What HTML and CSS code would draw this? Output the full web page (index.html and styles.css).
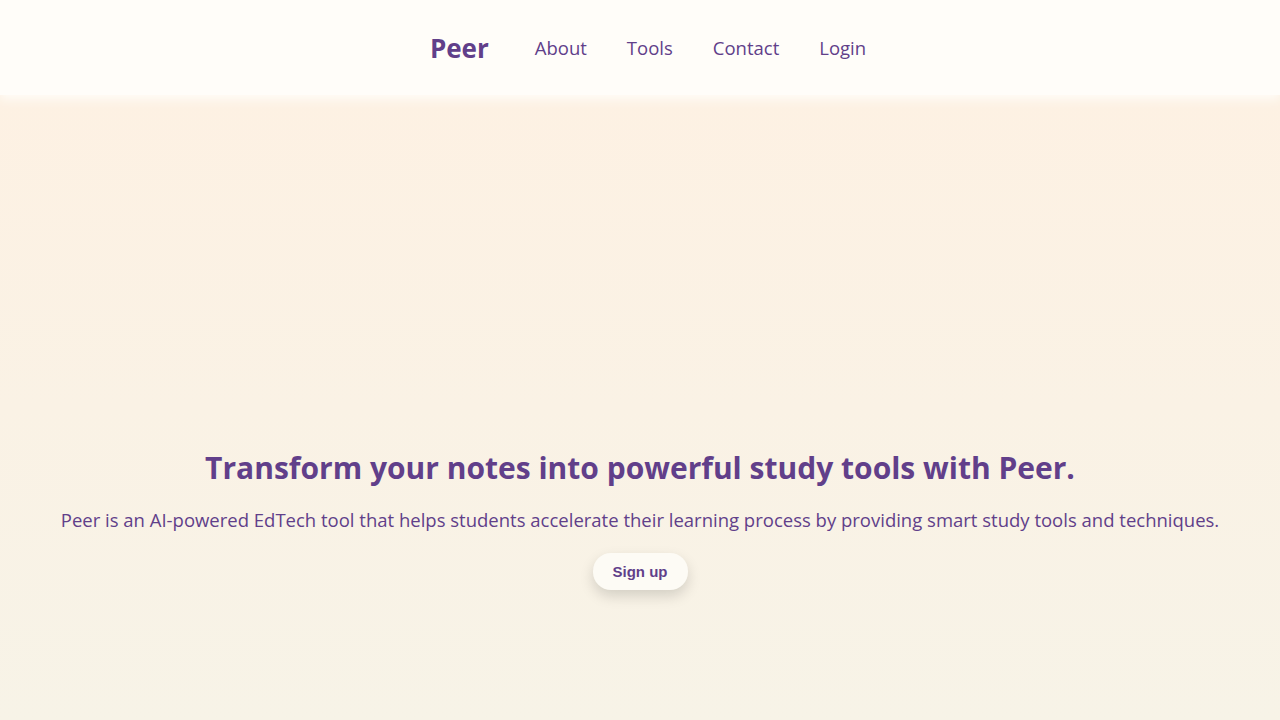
FILE: index.html
```html
<!DOCTYPE html>
<html lang="en">
<head>
    <meta charset="UTF-8">
    <meta name="viewport" content="width=device-width, initial-scale=1.0">
    <title>Peer</title>
    <link rel="stylesheet" href="styles.css">
</head>
<body>
    <header class="site-header">
        <a class="logo" href="#">Peer</a>
        <nav class="nav">
            <a href="#">About</a>
            <a href="#">Tools</a>
            <a href="#">Contact</a>
            <a href="#">Login</a>
        </nav>
    </header>

    <section class="hero">
        <h1>Transform your notes into powerful study tools with Peer.</h1>
        <p>Peer is an AI-powered EdTech tool that helps students accelerate their learning process by providing smart study tools and techniques.</p>
        <button class="signup-btn">Sign up</button>
    </section>
</body>
</html>
```

FILE: styles.css
```css
body {
    font-family: 'Open Sans', sans-serif;
    color: #613f8a;
    margin: 0;
    background: #f7f3e7;
}

a {
    color: inherit;
    text-decoration: none;
}

.site-header {
    position: relative;
    z-index: 1;
    height: 95px;
    box-sizing: border-box;
    padding-left: 16px;
    display: flex;
    align-items: center;
    justify-content: center;
    background: #fffdf9;
    box-shadow: 0 4px 10px #fffdf9;
}

.logo {
    font-size: 26px;
    font-weight: 700;
    margin-right: 46px;
}

.nav {
    display: flex;
    gap: 40px;
    font-size: 18.5px;
}

.hero {
    min-height: calc(100vh - 95px);
    box-sizing: border-box;
    padding-top: 352px;
    text-align: center;
    background: linear-gradient(#fdf1e3, #f7f3e7);
}

.hero h1 {
    font-size: 30px;
    font-weight: 700;
    margin: 0 0 19px;
}

.hero p {
    font-size: 18.5px;
    margin: 0 0 21px;
}

.signup-btn {
    font-family: 'Liberation Sans', Arial, sans-serif;
    font-size: 15px;
    font-weight: 700;
    color: #613f8a;
    background: #fdfbf5;
    border: none;
    border-radius: 18px;
    padding: 10px 20px;
    box-shadow: 0 6px 14px rgba(0, 0, 0, 0.15);
    cursor: pointer;
}
```
